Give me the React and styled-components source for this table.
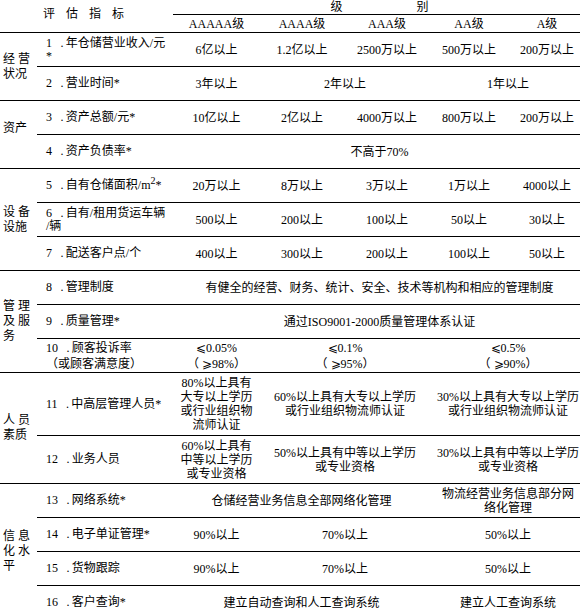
import React from "react";
import styled, { createGlobalStyle } from "styled-components";

const GlobalStyle = createGlobalStyle`
  html, body {
    margin: 0;
    padding: 0;
    background: #fff;
    overflow: hidden;
  }
  body {
    font-family: "Liberation Serif", "Noto Sans CJK SC", serif;
    font-size: 12px;
    color: #000;
  }
`;

// row heights include the 1px rule at the bottom of each row
const Table = styled.div`
  display: grid;
  width: 586px;
  grid-template-columns: 37px 136px 87px 84px 86px 78px 78px;
  grid-template-rows: 15px 18px repeat(10, 34px) 63px 48px repeat(4, 34px);
`;

const Cell = styled.div`
  grid-column: span ${(p) => p.$span || 1};
  grid-row: span ${(p) => p.$rows || 1};
  border-bottom: 1px solid #000;
  display: flex;
  align-items: center;
  justify-content: center;
  text-align: center;
  white-space: pre-line;
  line-height: ${(p) => p.$lh || 14}px;
  box-sizing: border-box;
`;

const IndexTitle = styled(Cell)`
  grid-column: span 2;
  grid-row: span 2;
  justify-content: flex-start;
  padding-left: 43px;
  padding-bottom: 4px;
  letter-spacing: 11px;
`;

const LevelTitle = styled(Cell)`
  grid-column: span 5;
  align-items: flex-start;
  gap: 74px;
  padding-top: 1px;
  line-height: 12px;
`;

const GroupCell = styled(Cell)`
  flex-direction: column;
  align-items: flex-start;
  justify-content: center;
  padding-left: 3px;
  line-height: 15px;
  padding-bottom: ${(p) => p.$lift || 0}px;
`;

const GroupLine = styled.span`
  letter-spacing: ${(p) => (p.$last ? 0 : 3)}px;
`;

const NameCell = styled(Cell)`
  justify-content: flex-start;
  text-align: left;
  padding-left: 9px;
  line-height: ${(p) => p.$lh || 13}px;
`;

const Sup = styled.sup`
  font-size: 10px;
  vertical-align: 5px;
  line-height: 0;
`;

const levels = ["AAAAA级", "AAAA级", "AAA级", "AA级", "A级"];

// number, then a spaced dot like the original document
const num = (n) => `${n}\u2002\u2009.\u2009`;

const groups = [
  {
    label: ["经营", "状况"],
    rows: [
      {
        name: num(1) + "年仓储营业收入/元\n*",
        cells: [["6亿以上", 1], ["1.2亿以上", 1], ["2500万以上", 1], ["500万以上", 1], ["200万以上", 1]],
      },
      { name: num(2) + "营业时间*", cells: [["3年以上", 1], ["2年以上", 2], ["1年以上", 2]] },
    ],
  },
  {
    label: ["资产"],
    lift: 12,
    rows: [
      {
        name: num(3) + "资产总额/元*",
        cells: [["10亿以上", 1], ["2亿以上", 1], ["4000万以上", 1], ["800万以上", 1], ["200万以上", 1]],
      },
      { name: num(4) + "资产负债率*", cells: [["不高于70%", 5]] },
    ],
  },
  {
    label: ["设备", "设施"],
    rows: [
      {
        name: (
          <>
            {num(5)}自有仓储面积/m<Sup>2</Sup>*
          </>
        ),
        cells: [["20万以上", 1], ["8万以上", 1], ["3万以上", 1], ["1万以上", 1], ["4000以上", 1]],
      },
      {
        name: num(6) + "自有/租用货运车辆\n/辆",
        cells: [["500以上", 1], ["200以上", 1], ["100以上", 1], ["50以上", 1], ["30以上", 1]],
      },
      {
        name: num(7) + "配送客户点/个",
        cells: [["400以上", 1], ["300以上", 1], ["200以上", 1], ["100以上", 1], ["50以上", 1]],
      },
    ],
  },
  {
    label: ["管理", "及服", "务"],
    rows: [
      {
        name: num(8) + "管理制度",
        cells: [["有健全的经营、财务、统计、安全、技术等机构和相应的管理制度", 5]],
      },
      { name: num(9) + "质量管理*", cells: [["通过ISO9001-2000质量管理体系认证", 5]] },
      {
        name: num(10) + "顾客投诉率\n（或顾客满意度）",
        lh: 16,
        cells: [
          ["⩽0.05%\n（ ⩾98%）", 1],
          ["⩽0.1%\n（ ⩾95%）", 2],
          ["⩽0.5%\n（ ⩾90%）", 2],
        ],
      },
    ],
  },
  {
    label: ["人员", "素质"],
    rows: [
      {
        name: num(11) + "中高层管理人员*",
        cells: [
          ["80%以上具有\n大专以上学历\n或行业组织物\n流师认证", 1],
          ["60%以上具有大专以上学历\n或行业组织物流师认证", 2],
          ["30%以上具有大专以上学历\n或行业组织物流师认证", 2],
        ],
      },
      {
        name: num(12) + "业务人员",
        cells: [
          ["60%以上具有\n中等以上学历\n或专业资格", 1],
          ["50%以上具有中等以上学历\n或专业资格", 2],
          ["30%以上具有中等以上学历\n或专业资格", 2],
        ],
      },
    ],
  },
  {
    label: ["信息", "化水", "平"],
    rows: [
      {
        name: num(13) + "网络系统*",
        cells: [
          ["仓储经营业务信息全部网络化管理", 3],
          ["物流经营业务信息部分网\n络化管理", 2],
        ],
      },
      { name: num(14) + "电子单证管理*", cells: [["90%以上", 1], ["70%以上", 2], ["50%以上", 2]] },
      { name: num(15) + "货物跟踪", cells: [["90%以上", 1], ["70%以上", 2], ["50%以上", 2]] },
      { name: num(16) + "客户查询*", cells: [["建立自动查询和人工查询系统", 3], ["建立人工查询系统", 2]] },
    ],
  },
];

export default function App() {
  return (
    <>
      <GlobalStyle />
      <Table>
        <IndexTitle>评估指标</IndexTitle>
        <LevelTitle>
          <span>级</span>
          <span>别</span>
        </LevelTitle>
        {levels.map((lv) => (
          <Cell key={lv}>{lv}</Cell>
        ))}
        {groups.map((g, gi) => (
          <React.Fragment key={gi}>
            <GroupCell $rows={g.rows.length} $lift={g.lift}>
              {g.label.map((l, i) => (
                <GroupLine key={i} $last={i === g.label.length - 1}>
                  {l}
                </GroupLine>
              ))}
            </GroupCell>
            {g.rows.map((r, ri) => (
              <React.Fragment key={ri}>
                <NameCell $lh={r.lh}>
                  <span>{r.name}</span>
                </NameCell>
                {r.cells.map(([text, span], ci) => (
                  <Cell key={ci} $span={span} $lh={r.lh}>
                    {text}
                  </Cell>
                ))}
              </React.Fragment>
            ))}
          </React.Fragment>
        ))}
      </Table>
    </>
  );
}
